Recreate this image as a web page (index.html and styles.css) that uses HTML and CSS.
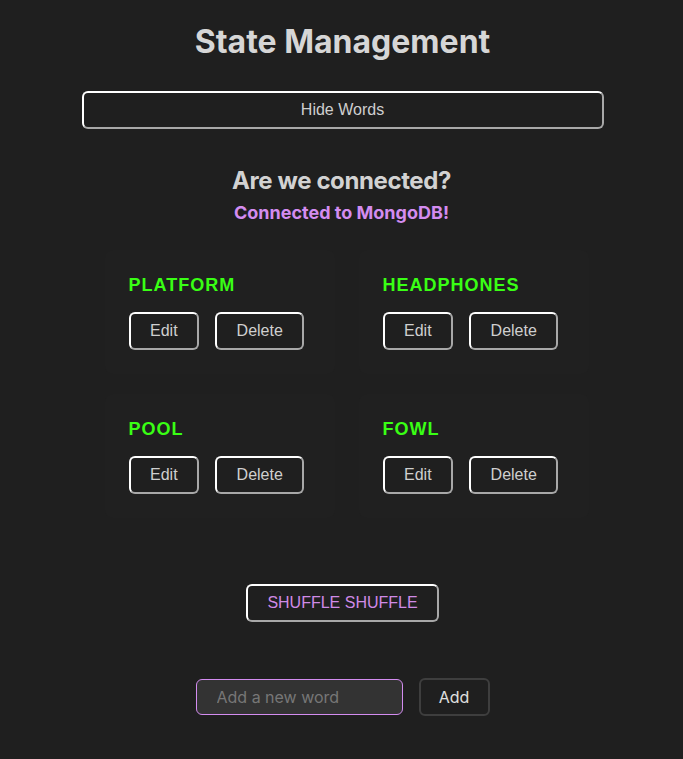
FILE: index.html
```html
<!DOCTYPE html>
<html lang="en">
<head>
<meta charset="utf-8">
<title>State Management</title>
<link rel="stylesheet" href="styles.css">
</head>
<body>
<main class="app">
  <h1 class="title">State Management</h1>
  <button class="btn btn-wide">Hide Words</button>
  <section class="status">
    <h2 class="status-q">Are we connected?</h2>
    <p class="status-a">Connected to MongoDB!</p>
  </section>
  <section class="words">
    <div class="card">
      <h3 class="word">PLATFORM</h3>
      <div class="actions"><button class="btn">Edit</button><button class="btn">Delete</button></div>
    </div>
    <div class="card">
      <h3 class="word">HEADPHONES</h3>
      <div class="actions"><button class="btn">Edit</button><button class="btn">Delete</button></div>
    </div>
    <div class="card">
      <h3 class="word">POOL</h3>
      <div class="actions"><button class="btn">Edit</button><button class="btn">Delete</button></div>
    </div>
    <div class="card">
      <h3 class="word">FOWL</h3>
      <div class="actions"><button class="btn">Edit</button><button class="btn">Delete</button></div>
    </div>
  </section>
  <button class="btn btn-shuffle">SHUFFLE SHUFFLE</button>
  <form class="add-form">
    <input class="add-input" type="text" placeholder="Add a new word">
    <button class="add-btn" type="button">Add</button>
  </form>
</main>
</body>
</html>
```
FILE: styles.css
```css
html, body {
  margin: 0;
  padding: 0;
  background: #1f1f1f;
}
body {
  font-family: "Liberation Sans", Arial, sans-serif;
  color: #d0d0d0;
}
.app {
  display: flex;
  flex-direction: column;
  align-items: center;
  padding-top: 23px;
}
.title {
  margin: 0;
  font-family: Inter, "Liberation Sans", sans-serif;
  font-weight: 700;
  font-size: 32px;
  line-height: 38px;
  color: #d6d6d6;
  transform: translateX(1px);
}
.btn {
  box-sizing: border-box;
  height: 38px;
  padding: 0 19.5px;
  background: #1f1f1f;
  color: #cfcfcf;
  font-family: "Liberation Sans", Arial, sans-serif;
  font-size: 16px;
  border: 2px solid;
  border-color: #ffffff #a8a8a8 #a8a8a8 #ffffff;
  border-radius: 6px;
  cursor: pointer;
}
.btn-wide {
  margin-top: 30px;
  width: 522px;
  transform: translateX(1px);
}
.status {
  margin-top: 38px;
  text-align: center;
}
.status-q {
  margin: 0;
  font-family: Inter, "Liberation Sans", sans-serif;
  font-weight: 700;
  font-size: 24px;
  line-height: 28px;
  letter-spacing: -0.4px;
  color: #d2d2d2;
}
.status-a {
  margin: 7px 0 0;
  font-family: Inter, "Liberation Sans", sans-serif;
  font-weight: 700;
  font-size: 18px;
  line-height: 22px;
  color: #d38cf0;
}
.words {
  margin-top: 26px;
  display: grid;
  grid-template-columns: 230px 230px;
  column-gap: 24px;
  row-gap: 20px;
  transform: translateX(5px);
}
.card {
  background: #202020;
  padding: 24px;
  box-sizing: border-box;
  height: 124px;
  border-radius: 8px;
}
.word {
  margin: 0 0 16px;
  font-family: "Liberation Sans", Arial, sans-serif;
  font-weight: 700;
  font-size: 18px;
  line-height: 22px;
  letter-spacing: 1px;
  color: #39ff14;
}
.actions {
  display: flex;
  gap: 16px;
}
.btn-shuffle {
  margin-top: 66px;
  height: 38px;
  padding: 0 19px;
  color: #d08ae6;
  transform: translateX(1px);
}
.add-form {
  margin: 56px 0 0;
  display: flex;
  align-items: center;
  gap: 16px;
  transform: translateX(1px);
}
.add-input {
  box-sizing: border-box;
  width: 207px;
  height: 36px;
  padding: 0 20px;
  background: #333333;
  border: 1px solid #d38cf0;
  border-radius: 6px;
  color: #ddd;
  font-family: Inter, "Liberation Sans", sans-serif;
  font-size: 16px;
  outline: none;
}
.add-input::placeholder {
  color: #777777;
}
.add-btn {
  box-sizing: border-box;
  width: 71px;
  height: 38px;
  background: #1f1f1f;
  border: 2px solid #3e3e3e;
  border-radius: 6px;
  color: #e0e0e0;
  font-family: Inter, "Liberation Sans", sans-serif;
  font-size: 16px;
}
```
